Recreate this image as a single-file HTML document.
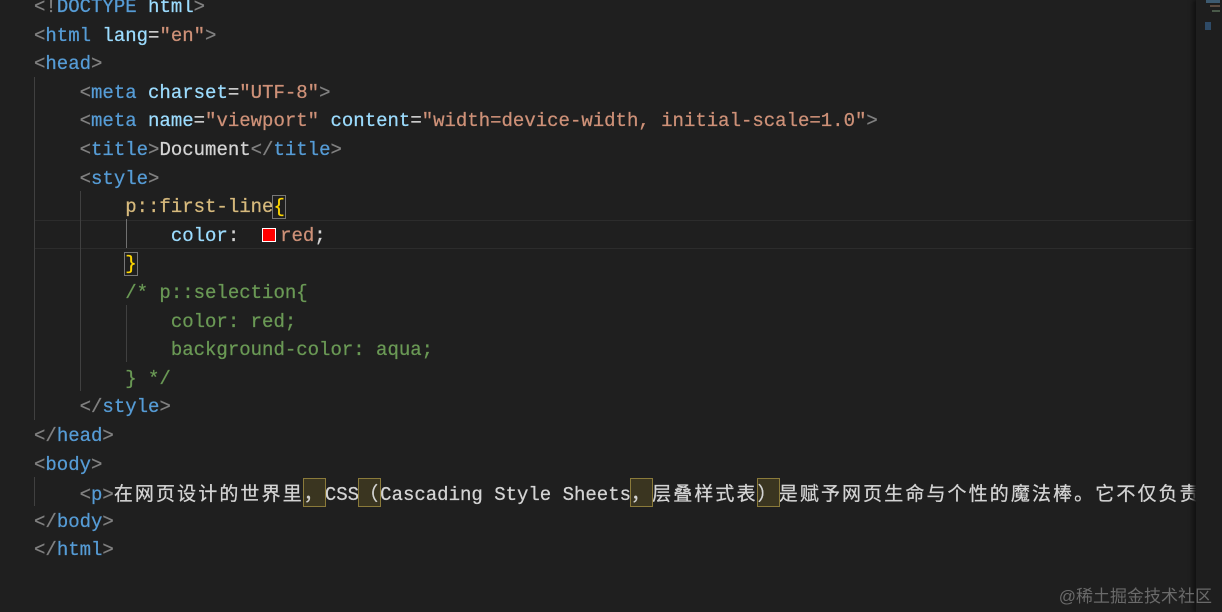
<!DOCTYPE html>
<html><head><meta charset="utf-8"><style>
body{margin:0;width:1222px;height:612px;background:#1f1f1f;overflow:hidden;position:relative;font-family:"Liberation Mono","Noto Sans CJK SC",monospace;font-size:19px;}
.l{position:absolute;left:34px;height:28.6px;line-height:28.6px;white-space:pre;color:#d4d4d4;-webkit-text-stroke:0.25px}
.g{color:#808080}.t{color:#569cd6}.a{color:#9cdcfe}.s{color:#ce9178}.sel{color:#d7ba7d}.b{color:#ffd700}.cm{color:#6a9955}
.c{letter-spacing:2.1px;font-family:"Noto Sans CJK SC",sans-serif}
.bx{outline:1px solid #8a7a3a;background:#3a3520}
.ig{position:absolute;width:1px;background:#404040}
.sw{display:inline-block;width:12px;height:12px;background:#f00;border:1.5px solid #fff;vertical-align:-1px;margin-right:4px;-webkit-text-stroke:0}
</style></head><body>
<div style="position:absolute;left:34px;top:220px;width:1162px;height:27px;border-top:1px solid #2c2c2c;border-bottom:1px solid #2c2c2c"></div>
<div class="ig" style="left:34px;top:77px;height:343px"></div>
<div class="ig" style="left:80px;top:191px;height:200px"></div>
<div class="ig" style="left:126px;top:219px;height:29px;background:#707070"></div>
<div class="ig" style="left:126px;top:305px;height:57px"></div>
<div class="ig" style="left:34px;top:477px;height:29px"></div>
<div class="l" style="top:-7px"><span class="g">&lt;!</span><span class="t">DOCTYPE</span> <span class="a">html</span><span class="g">&gt;</span></div>
<div class="l" style="top:21.6px"><span class="g">&lt;</span><span class="t">html</span> <span class="a">lang</span>=<span class="s">"en"</span><span class="g">&gt;</span></div>
<div class="l" style="top:50.2px"><span class="g">&lt;</span><span class="t">head</span><span class="g">&gt;</span></div>
<div class="l" style="top:78.8px">    <span class="g">&lt;</span><span class="t">meta</span> <span class="a">charset</span>=<span class="s">"UTF-8"</span><span class="g">&gt;</span></div>
<div class="l" style="top:107.4px">    <span class="g">&lt;</span><span class="t">meta</span> <span class="a">name</span>=<span class="s">"viewport"</span> <span class="a">content</span>=<span class="s">"width=device-width, initial-scale=1.0"</span><span class="g">&gt;</span></div>
<div class="l" style="top:136px">    <span class="g">&lt;</span><span class="t">title</span><span class="g">&gt;</span>Document<span class="g">&lt;/</span><span class="t">title</span><span class="g">&gt;</span></div>
<div class="l" style="top:164.6px">    <span class="g">&lt;</span><span class="t">style</span><span class="g">&gt;</span></div>
<div class="l" style="top:193.2px">        <span class="sel">p::first-line</span><span class="b" style="outline:1px solid #777">{</span></div>
<div class="l" style="top:221.8px">            <span class="a">color</span>:  <span class="sw"></span><span class="s">red</span>;</div>
<div class="l" style="top:250.4px">        <span class="b" style="outline:1px solid #777">}</span></div>
<div class="l cm" style="top:279px">        /* p::selection{</div>
<div class="l cm" style="top:307.6px">            color: red;</div>
<div class="l cm" style="top:336.2px">            background-color: aqua;</div>
<div class="l cm" style="top:364.8px">        } */</div>
<div class="l" style="top:393.4px">    <span class="g">&lt;/</span><span class="t">style</span><span class="g">&gt;</span></div>
<div class="l" style="top:422px"><span class="g">&lt;/</span><span class="t">head</span><span class="g">&gt;</span></div>
<div class="l" style="top:450.6px"><span class="g">&lt;</span><span class="t">body</span><span class="g">&gt;</span></div>
<div class="l" style="top:479.2px">    <span class="g">&lt;</span><span class="t">p</span><span class="g">&gt;</span><span class="c">在网页设计的世界里</span><span class="c bx">，</span>CSS<span class="c bx">（</span>Cascading Style Sheets<span class="c bx">，</span><span class="c">层叠样式表</span><span class="c bx">）</span><span class="c">是赋予网页生命与个性的魔法棒。它不仅负责</span></div>
<div class="l" style="top:507.8px"><span class="g">&lt;/</span><span class="t">body</span><span class="g">&gt;</span></div>
<div class="l" style="top:536.4px"><span class="g">&lt;/</span><span class="t">html</span><span class="g">&gt;</span></div>
<div style="position:absolute;left:1196px;top:0;width:26px;height:612px;background:#1e1e1e;box-shadow:-3px 0 4px #111"></div>
<div style="position:absolute;left:1206px;top:0;width:14px;height:3px;background:#3d5a70"></div>
<div style="position:absolute;left:1210px;top:5px;width:10px;height:2px;background:#5a4a40"></div>
<div style="position:absolute;left:1212px;top:10px;width:8px;height:2px;background:#4a5a4a"></div>
<div style="position:absolute;left:1205px;top:22px;width:6px;height:8px;background:#2e4a66"></div>
<div style="position:absolute;right:10px;top:582px;color:#6a6a6a;font-family:'Liberation Sans','Noto Sans CJK SC',sans-serif;font-size:17px">@稀土掘金技术社区</div>
</body></html>
